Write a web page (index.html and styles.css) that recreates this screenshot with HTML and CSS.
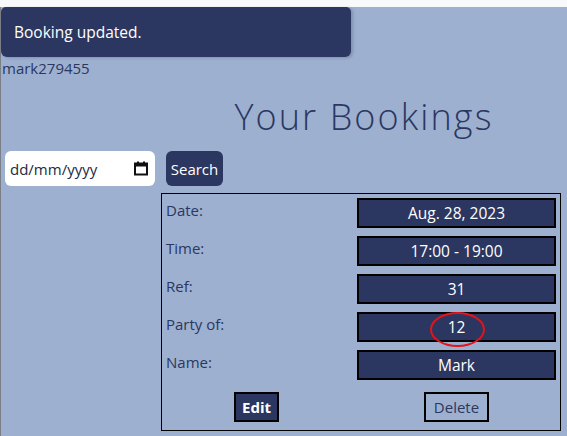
FILE: index.html
```html
<!DOCTYPE html>
<html lang="en">
<head>
<meta charset="utf-8">
<title>Your Bookings</title>
<link rel="stylesheet" href="styles.css">
</head>
<body>
<div class="topstrip"></div>
<div class="page">
  <div class="toast">Booking updated.</div>
  <div class="user">mark279455</div>
  <h1 class="title">Your Bookings</h1>
  <div class="content">
    <form class="search">
      <div class="date-field">
        <input class="date-input" type="text" placeholder="dd/mm/yyyy">
        <svg class="cal" width="14" height="15" viewBox="0 0 14 15"><rect x="1" y="2.5" width="12" height="11" fill="none" stroke="#111" stroke-width="2"/><rect x="1" y="2.5" width="12" height="3" fill="#111"/><rect x="3" y="0.5" width="2" height="3" fill="#111"/><rect x="9" y="0.5" width="2" height="3" fill="#111"/></svg>
      </div>
    </form>
    <div class="right">
      <button class="btn-search" type="button">Search</button>
      <div class="card">
        <div class="label">Date:</div><div class="value">Aug. 28, 2023</div>
        <div class="label">Time:</div><div class="value">17:00 - 19:00</div>
        <div class="label">Ref:</div><div class="value">31</div>
        <div class="label">Party of:</div><div class="value"><span class="circled">12</span></div>
        <div class="label">Name:</div><div class="value">Mark</div>
        <div class="action"><button class="btn-edit" type="button">Edit</button></div>
        <div class="action"><button class="btn-delete" type="button">Delete</button></div>
      </div>
    </div>
  </div>
</div>
</body>
</html>
```
FILE: styles.css
```css
* { box-sizing: border-box; }
html, body { margin: 0; padding: 0; }
body {
  background: #9db0d0;
  font-family: "Open Sans", "DejaVu Sans", sans-serif;
  color: #2b3760;
  height: 436px;
  overflow: hidden;
}
.topstrip { height: 7px; background: #f8f9fb; }
.page {
  border-left: 1px solid #7b7f88;
  height: 429px;
}
.toast {
  width: 350px;
  height: 50px;
  background: #2b3760;
  color: #fff;
  border-radius: 5px 5px 6px 6px;
  font-size: 15.5px;
  padding: 0 13px;
  display: flex;
  align-items: center;
  box-shadow: 2px 1px 3px rgba(40, 50, 80, 0.25);
}
.user {
  font-size: 15px;
  line-height: 20px;
  padding-left: 1px;
  margin-top: 1px;
}
.title {
  margin: 17px 0 0 160px;
  text-align: center;
  font-weight: 300;
  font-size: 36px;
  line-height: 44px;
  letter-spacing: 2.1px;
  color: #2b3760;
}
.content {
  display: grid;
  grid-template-columns: 160px 400px;
  margin-top: 12px;
}
.search { padding-left: 4px; }
.date-field {
  width: 150px;
  height: 35px;
  background: #fff;
  border-radius: 6px;
  display: flex;
  align-items: center;
  padding: 0 7px 0 5px;
}
.date-input {
  border: 0;
  outline: 0;
  background: transparent;
  width: 120px;
  font-family: "Open Sans", sans-serif;
  font-size: 15px;
  color: #2b3760;
  padding: 0;
}
.date-input::placeholder { color: #222a44; opacity: 1; }
.cal { margin-left: auto; }
.right { display: flex; flex-direction: column; align-items: flex-start; }
.btn-search {
  margin-left: 5px;
  width: 57px;
  height: 35px;
  border: 0;
  border-radius: 6px;
  background: #2b3760;
  color: #fff;
  font-family: "Open Sans", sans-serif;
  font-size: 15px;
  padding: 0;
}
.card {
  margin-top: 7px;
  width: 400px;
  border: 1px solid #000;
  display: grid;
  grid-template-columns: 1fr 199px;
  row-gap: 8px;
  padding: 4px 4px 8px 4px;
}
.label {
  font-size: 15px;
  font-weight: 500;
  line-height: 20px;
  padding-top: 2px;
  color: #2b3760;
}
.value {
  height: 30px;
  background: #2b3760;
  border: 2px solid #000;
  color: #fff;
  font-size: 15.5px;
  display: flex;
  align-items: center;
  justify-content: center;
}
.circled { position: relative; }
.circled::after {
  content: "";
  position: absolute;
  left: 50%;
  top: 50%;
  width: 51px;
  height: 31px;
  margin-left: -26px;
  margin-top: -15px;
  border: 2px solid #e3141c;
  border-radius: 50%;
}
.action {
  display: flex;
  justify-content: center;
  margin-top: 4px;
}
.btn-edit, .btn-delete {
  height: 30px;
  border: 2px solid #000;
  font-family: "Open Sans", sans-serif;
  font-size: 15px;
  padding: 0 5px;
}
.btn-edit {
  background: #2b3760;
  color: #fff;
  font-weight: 700;
  width: 45px;
  margin-left: -10px;
}
.btn-delete {
  background: transparent;
  color: #2b3760;
  font-weight: 500;
  width: 65px;
}
```
